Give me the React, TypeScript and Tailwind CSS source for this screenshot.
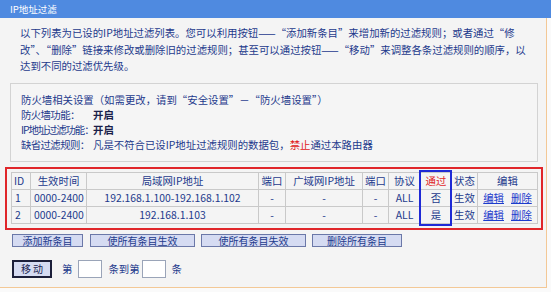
import React from "react"

const cols = [
  { label: "ID", w: "w-[19px]" },
  { label: "生效时间", w: "w-[56px]" },
  { label: "局域网IP地址", w: "w-[172px]" },
  { label: "端口", w: "w-[27px]" },
  { label: "广域网IP地址", w: "w-[77px]" },
  { label: "端口", w: "w-[26px]" },
  { label: "协议", w: "w-[32px]" },
  { label: "通过", w: "w-[31px]" },
  { label: "状态", w: "w-[26px]" },
  { label: "编辑", w: "w-[60px]" },
]

const rules = [
  { id: "1", time: "0000-2400", lan: "192.168.1.100-192.168.1.102", pass: "否" },
  { id: "2", time: "0000-2400", lan: "192.168.1.103", pass: "是" },
]

function Btn({ text, w }: { text: string; w: string }) {
  return (
    <button
      className={`${w} h-[13px] flex items-center justify-center bg-[#d5dbf2] border border-[#6b78a8] text-[10px] leading-none text-[#1d3a8c]`}
    >
      {text}
    </button>
  )
}

export default function App() {
  const cell = "border border-[#c9c9c9] h-[17px] p-0 text-center font-normal"
  return (
    <div className="w-[551px] h-[292px] bg-[#fafafa] overflow-hidden font-['Noto_Sans_CJK_SC','Noto_Sans',sans-serif] text-[10.4px] text-[#1d3a8c]">
      <div className="h-[18px] bg-[#4f8ae0] text-white text-[9.5px] flex items-center pl-[10px]">
        IP地址过滤
      </div>

      <div className="w-[547px] bg-[#f4f4f4] border-r border-b border-[#f3c896] pb-[9px]">
        {/* intro */}
        <div className="pl-[20px] pt-[7px] leading-[16.5px] whitespace-nowrap">
          <p>以下列表为已设的IP地址过滤列表。您可以利用按钮——“添加新条目”来增加新的过滤规则；或者通过“修</p>
          <p>改”、“删除”链接来修改或删除旧的过滤规则；甚至可以通过按钮——“移动”来调整各条过滤规则的顺序，以</p>
          <p>达到不同的过滤优先级。</p>
        </div>

        {/* firewall box */}
        <div className="ml-[10px] w-[528px] mt-[8.5px] border border-[#d3d3d3] bg-[#f5f5f5] pl-[10px] pt-[8px] pb-[9px] leading-[15px] whitespace-nowrap">
          <p>防火墙相关设置（如需更改，请到“安全设置”－“防火墙设置”）</p>
          <div className="flex">
            <span className="w-[72px] shrink-0 tracking-[-0.6px]">防火墙功能：</span>
            <span className="font-bold text-[#1a1f4a]">开启</span>
          </div>
          <div className="flex">
            <span className="w-[72px] shrink-0 tracking-[-1.1px]">IP地址过滤功能：</span>
            <span className="font-bold text-[#1a1f4a]">开启</span>
          </div>
          <div className="flex">
            <span className="w-[72px] shrink-0 tracking-[-0.6px]">缺省过滤规则：</span>
            <span>
              凡是不符合已设IP地址过滤规则的数据包，<span className="text-[#e02020]">禁止</span>通过本路由器
            </span>
          </div>
        </div>

        {/* table */}
        <div className="ml-[5px] w-[538px] mt-[5px] border-2 border-[#e0262a] pl-[4px] pt-[3px] pb-[4px]">
          <div className="relative w-[526px]">
            <table className="table-fixed border-collapse w-[526px]">
              <thead>
                <tr>
                  {cols.map((c, i) => (
                    <th
                      key={i}
                      className={`${cell} ${c.w} ${i === 0 ? "text-left pl-[2px]" : ""} ${c.label === "通过" ? "text-[#e0262a]" : ""}`}
                    >
                      {c.label}
                    </th>
                  ))}
                </tr>
              </thead>
              <tbody>
                {rules.map((r) => (
                  <tr key={r.id}>
                    <td className={`${cell} text-left pl-[3px]`}>{r.id}</td>
                    <td className={`${cell} text-left pl-[3px]`}>{r.time}</td>
                    <td className={cell}>{r.lan}</td>
                    <td className={cell}>-</td>
                    <td className={cell}>-</td>
                    <td className={cell}>-</td>
                    <td className={cell}>ALL</td>
                    <td className={cell}>{r.pass}</td>
                    <td className={cell}>生效</td>
                    <td className={cell}>
                      <a className="underline text-[#1d3ccc] mr-[7px]">编辑</a>
                      <a className="underline text-[#1d3ccc]">删除</a>
                    </td>
                  </tr>
                ))}
              </tbody>
            </table>
            <div className="absolute left-[408px] top-[-2px] w-[33px] h-[56px] border-2 border-[#1f2ad6]" />
          </div>
        </div>

        {/* buttons */}
        <div className="flex mt-[4px] ml-[12px]">
          <Btn text="添加新条目" w="w-[71px]" />
          <div className="w-[7px]" />
          <Btn text="使所有条目生效" w="w-[105px]" />
          <div className="w-[6px]" />
          <Btn text="使所有条目失效" w="w-[105px]" />
          <div className="w-[6px]" />
          <Btn text="删除所有条目" w="w-[90px]" />
        </div>

        {/* move */}
        <div className="flex items-center mt-[13px] ml-[12px] h-[18px]">
          <button className="w-[40px] h-[18px] flex items-center justify-center bg-[#d5dbf2] border-2 border-[#1c1f3a] text-[10px] leading-none text-[#1a2350]">
            移 动
          </button>
          <span className="ml-[10px]">第</span>
          <input className="ml-[6px] w-[24px] h-[18px] bg-white border border-[#9aa4b8]" />
          <span className="ml-[6px]">条到第</span>
          <input className="ml-[2px] w-[24px] h-[18px] bg-white border border-[#9aa4b8]" />
          <span className="ml-[6px]">条</span>
        </div>
      </div>
    </div>
  )
}
